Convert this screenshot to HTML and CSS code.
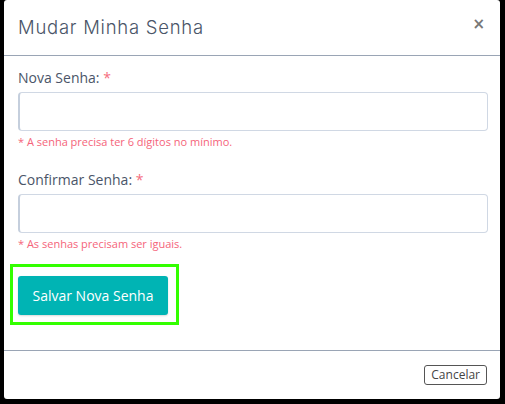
FILE: index.html
```html
<!DOCTYPE html>
<html lang="pt">
<head>
<meta charset="utf-8">
<link rel="stylesheet" href="styles.css">
</head>
<body>
<div class="modal">
  <div class="modal-header">
    <h1 class="modal-title">Mudar Minha Senha</h1>
    <span class="close">&times;</span>
  </div>
  <div class="modal-body">
    <div class="field">
      <label class="label">Nova Senha: <span class="req">*</span></label>
      <input class="input" type="password">
      <div class="error">* A senha precisa ter 6 dígitos no mínimo.</div>
    </div>
    <div class="field second">
      <label class="label">Confirmar Senha: <span class="req">*</span></label>
      <input class="input" type="password">
      <div class="error">* As senhas precisam ser iguais.</div>
    </div>
    <div class="highlight">
      <button class="btn-primary">Salvar Nova Senha</button>
    </div>
  </div>
  <div class="modal-footer">
    <button class="btn-cancel">Cancelar</button>
  </div>
</div>
</body>
</html>
```
FILE: styles.css
```css
html, body {
  margin: 0;
  padding: 0;
  background: #000;
  height: 100%;
}
body {
  font-family: "Open Sans", "Noto Sans", sans-serif;
  padding-left: 4px;
}
.modal {
  width: 496px;
  height: 399px;
  background: #fff;
  border-radius: 3px;
  display: flex;
  flex-direction: column;
  box-sizing: border-box;
}
.modal-header {
  height: 56px;
  box-sizing: border-box;
  border-bottom: 1px solid #9aa5b5;
  display: flex;
  align-items: center;
  justify-content: space-between;
  padding: 0 15px 0 14px;
}
.modal-title {
  margin: 0;
  font-family: "Inter", "Noto Sans", sans-serif;
  font-weight: 300;
  font-size: 18.5px;
  color: #4a5568;
  letter-spacing: 0.75px;
  padding-bottom: 2px;
}
.close {
  font-size: 15px;
  font-weight: bold;
  color: #777;
  font-family: "DejaVu Sans", sans-serif;
  line-height: 1;
  padding-bottom: 6px;
}
.modal-body {
  flex: 1;
  padding: 13px 14px 0 14px;
}
.field {
  display: flex;
  flex-direction: column;
}
.field.second {
  margin-top: 22px;
}
.label {
  font-size: 14px;
  color: #4a5568;
  line-height: 18px;
  margin-bottom: 5px;
}
.req {
  color: #f56c7e;
}
.input {
  height: 39px;
  box-sizing: border-box;
  border: 1px solid #d0d8e4;
  border-left: 2px solid #c5cfdd;
  border-radius: 4px;
  width: 470px;
  margin: 0;
  background: #fff;
}
.error {
  font-size: 11px;
  color: #f5647a;
  margin-top: 4px;
  line-height: 14px;
}
.highlight {
  margin-top: 13px;
  margin-left: -8px;
  width: 169px;
  height: 61px;
  box-sizing: border-box;
  border: 3px solid #33ff00;
  padding: 9px 0 0 5px;
}
.btn-primary {
  width: 150px;
  height: 39px;
  border: none;
  border-radius: 3px;
  background: #00b4b4;
  color: #fff;
  font-family: "Open Sans", "Noto Sans", sans-serif;
  font-size: 14px;
  font-weight: 500;
  padding: 0;
  box-shadow: 0 1px 2px rgba(0,0,0,0.15);
}
.modal-footer {
  height: 49px;
  box-sizing: border-box;
  border-top: 1px solid #9aa5b5;
  display: flex;
  align-items: center;
  justify-content: flex-end;
  padding: 0 13px 0 0;
}
.btn-cancel {
  font-family: "Open Sans", "Noto Sans", sans-serif;
  font-size: 12px;
  color: #444;
  background: #fff;
  border: 1px solid #555;
  border-radius: 3px;
  height: 20px;
  padding: 0 6px;
  line-height: 18px;
}
```
